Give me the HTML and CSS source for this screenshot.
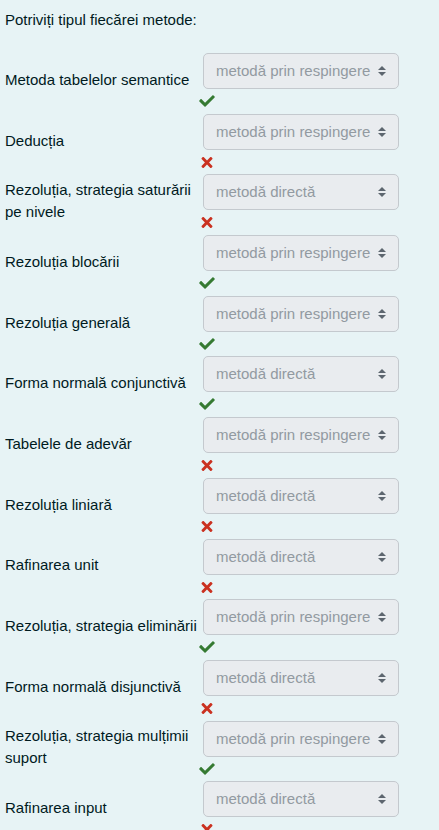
FILE: index.html
```html
<!DOCTYPE html>
<html lang="ro"><head><meta charset="utf-8"><link rel="stylesheet" href="styles.css"></head>
<body>
<svg width="0" height="0" class="defs" aria-hidden="true">
  <defs>
    <symbol id="ok" viewBox="0 60 512 392"><path d="M173.898 439.404l-166.4-166.4c-9.997-9.997-9.997-26.206 0-36.204l36.203-36.204c9.997-9.998 26.207-9.998 36.204 0L192 312.69 432.095 72.596c9.997-9.997 26.207-9.997 36.204 0l36.203 36.204c9.997 9.997 9.997 26.206 0 36.204l-294.4 294.401c-9.998 9.997-26.207 9.997-36.204-.001z"/></symbol>
    <symbol id="bad" viewBox="0 80 352 352"><path d="M242.72 256l100.07-100.07c12.28-12.28 12.28-32.19 0-44.48l-22.24-22.24c-12.28-12.28-32.19-12.28-44.48 0L176 189.28 75.93 89.21c-12.28-12.28-32.19-12.28-44.480 0L9.21 111.45c-12.28 12.28-12.28 32.19 0 44.48L109.28 256 9.21 356.07c-12.28 12.28-12.28 32.19 0 44.48l22.24 22.240c12.28 12.28 32.2 12.28 44.48 0L176 322.72l100.07 100.07c12.28 12.28 32.2 12.28 44.48 0l22.24-22.24c12.28-12.28 12.28-32.19 0-44.48L242.72 256z"/></symbol>
    <symbol id="arr" viewBox="0 0 10 12"><path d="M1 5 L5 1 L9 5 Z M1 7 L9 7 L5 11 Z"/></symbol>
  </defs>
</svg>
<div class="formulation">
  <div class="qtext">Potriviți tipul fiecărei metode:</div>
  <div class="answers">
    <div class="row"><div class="label">Metoda tabelelor semantice</div><div class="ctrl"><div class="sel">metodă prin respingere<svg class="arrow"><use href="#arr"/></svg></div><svg class="fb ok"><use href="#ok"/></svg></div></div>
    <div class="row"><div class="label">Deducția</div><div class="ctrl"><div class="sel">metodă prin respingere<svg class="arrow"><use href="#arr"/></svg></div><svg class="fb bad"><use href="#bad"/></svg></div></div>
    <div class="row"><div class="label">Rezoluția, strategia saturării pe nivele</div><div class="ctrl"><div class="sel">metodă directă<svg class="arrow"><use href="#arr"/></svg></div><svg class="fb bad"><use href="#bad"/></svg></div></div>
    <div class="row"><div class="label">Rezoluția blocării</div><div class="ctrl"><div class="sel">metodă prin respingere<svg class="arrow"><use href="#arr"/></svg></div><svg class="fb ok"><use href="#ok"/></svg></div></div>
    <div class="row"><div class="label">Rezoluția generală</div><div class="ctrl"><div class="sel">metodă prin respingere<svg class="arrow"><use href="#arr"/></svg></div><svg class="fb ok"><use href="#ok"/></svg></div></div>
    <div class="row"><div class="label">Forma normală conjunctivă</div><div class="ctrl"><div class="sel">metodă directă<svg class="arrow"><use href="#arr"/></svg></div><svg class="fb ok"><use href="#ok"/></svg></div></div>
    <div class="row"><div class="label">Tabelele de adevăr</div><div class="ctrl"><div class="sel">metodă prin respingere<svg class="arrow"><use href="#arr"/></svg></div><svg class="fb bad"><use href="#bad"/></svg></div></div>
    <div class="row"><div class="label">Rezoluția liniară</div><div class="ctrl"><div class="sel">metodă directă<svg class="arrow"><use href="#arr"/></svg></div><svg class="fb bad"><use href="#bad"/></svg></div></div>
    <div class="row"><div class="label">Rafinarea unit</div><div class="ctrl"><div class="sel">metodă directă<svg class="arrow"><use href="#arr"/></svg></div><svg class="fb bad"><use href="#bad"/></svg></div></div>
    <div class="row"><div class="label">Rezoluția, strategia eliminării</div><div class="ctrl"><div class="sel">metodă prin respingere<svg class="arrow"><use href="#arr"/></svg></div><svg class="fb ok"><use href="#ok"/></svg></div></div>
    <div class="row"><div class="label">Forma normală disjunctivă</div><div class="ctrl"><div class="sel">metodă directă<svg class="arrow"><use href="#arr"/></svg></div><svg class="fb bad"><use href="#bad"/></svg></div></div>
    <div class="row"><div class="label">Rezoluția, strategia mulțimii suport</div><div class="ctrl"><div class="sel">metodă prin respingere<svg class="arrow"><use href="#arr"/></svg></div><svg class="fb ok"><use href="#ok"/></svg></div></div>
    <div class="row"><div class="label">Rafinarea input</div><div class="ctrl"><div class="sel">metodă directă<svg class="arrow"><use href="#arr"/></svg></div><svg class="fb bad"><use href="#bad"/></svg></div></div>
  </div>
</div>
</body></html>
```
FILE: styles.css
```css
html,body{margin:0;padding:0;background:#e7f3f5}
.defs{position:absolute;width:0;height:0;overflow:hidden}
.formulation{font-family:"Liberation Sans",Arial,sans-serif;font-size:15px;line-height:22px;color:#001a1e;padding:9px 0 0 5px}
.qtext{margin-bottom:21px}
.row{display:grid;grid-template-columns:194px 200px;align-items:center;padding:1px 0;height:60.7px;box-sizing:border-box}
.label{padding-bottom:5px}
.ctrl{display:flex;flex-direction:column;align-items:flex-start}
.sel{box-sizing:border-box;margin-left:4px;width:196px;height:36px;border:1px solid #c4c9ce;border-radius:5px;background:#e9ecef;color:#929aa1;padding:0 0 0 12px;display:flex;align-items:center;justify-content:space-between;white-space:nowrap}
.arrow{width:10px;height:12px;fill:#5d666f;margin-right:11px;flex:none}
.fb{width:16px;height:12px;margin-top:6px;margin-bottom:4.7px;flex:none}
.ok{fill:#357a32}
.bad{fill:#ca3120;height:11px;margin-top:7px}
```
